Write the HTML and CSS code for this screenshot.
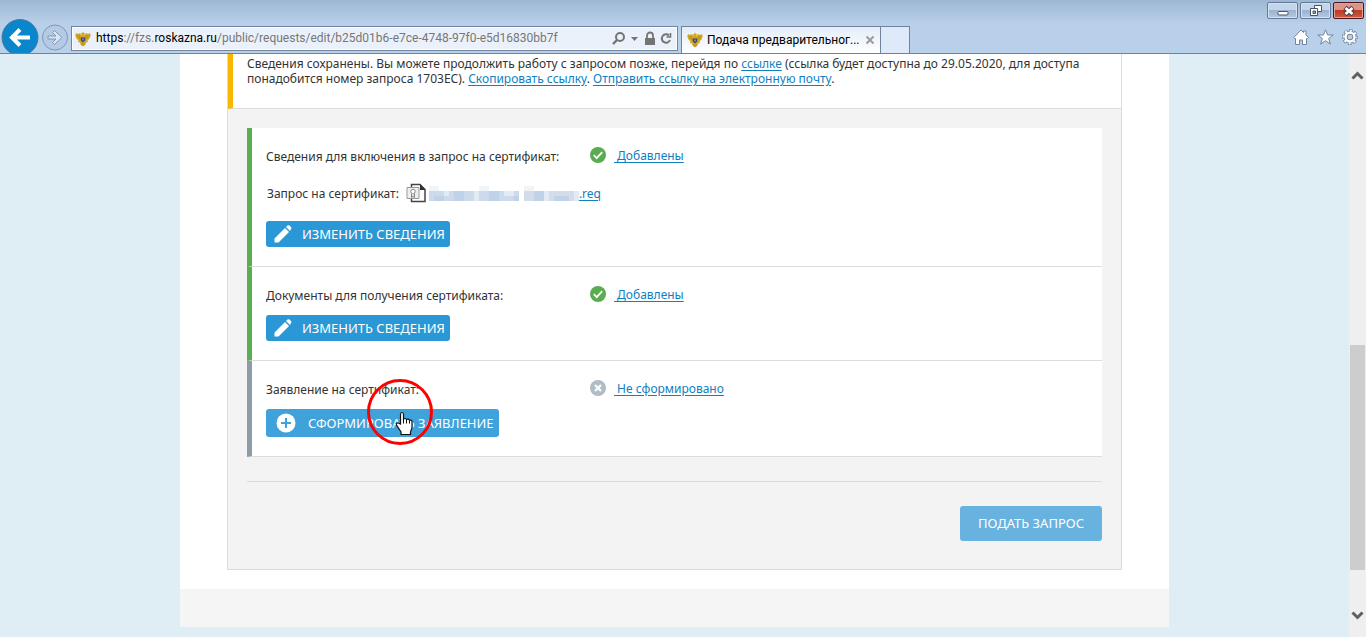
FILE: index.html
```html
<!DOCTYPE html>
<html lang="ru">
<head>
<meta charset="utf-8">
<title>Подача предварительного запроса</title>
<link rel="stylesheet" href="styles.css">
</head>
<body>
<svg class="defs" width="0" height="0" aria-hidden="true">
  <symbol id="eagle" viewBox="0 0 16 16">
    <path fill="#d2a722" d="M1 2l2 1 2-1 1 2h.8L5.500 2l1.500.3L8 .5l1 1.800 1.500-.3-1.300 2h.8l1-2 2 1 2-1 .7 2.500-1.200 3-2 2 .5 1.500-2 .5-.5 2-1.300.7L8 15.500l-1.200-1.200-1.300-.7-.5-2-2-.5.5-1.500-2-2-1.200-3z"/>
    <path stroke="#a07c14" fill="none" stroke-width=".5" d="M2 4l3 4M3.500 3.500L5.500 7M14 4l-3 4M12.500 3.500L10.500 7M7 12v3M9 12v3"/>
    <path fill="#3a3f86" d="M5.800 6.500h4.400v3L8 11.500 5.800 9.500z"/>
    <path fill="#d8c06a" d="M7.500 7.500h1v2h-1z"/>
  </symbol>
  <symbol id="check" viewBox="0 0 16 16">
    <circle cx="8" cy="8" r="8" fill="#57ad50"/>
    <path d="M3.800 8.200l2.900 2.900 5.500-6" fill="none" stroke="#fff" stroke-width="1.800"/>
  </symbol>
  <symbol id="cross" viewBox="0 0 16 16">
    <circle cx="8" cy="8" r="8" fill="#afbdc5"/>
    <path d="M5 5l6 6M11 5l-6 6" fill="none" stroke="#fff" stroke-width="2.200"/>
  </symbol>
  <symbol id="pencil" viewBox="0 0 18 18">
    <path fill="#fff" d="M.5 17.500v-4L11 3l4 4L4.500 17.500zM12 2l1.500-1.400q1-.8 2 0l1.500 1.500q.8 1 0 2L16 6z"/>
  </symbol>
</svg>
<header class="browser">
  <div class="titlebar">
    <button class="win" aria-label="Свернуть"><svg width="30" height="16"><rect x="10" y="8.500" width="10" height="3.500" rx="1" fill="#fff" stroke="#4a5367"/></svg></button>
    <button class="win" aria-label="Восстановить"><svg width="30" height="16" fill="#fff" stroke="#4a5367"><path d="M13.500 2.500h7v6h-7z"/><path d="M9.500 5.500h7v7h-7z"/><path d="M12 8h2.500v2.500H12z" fill="#8ba6c8"/></svg></button>
    <button class="win close" aria-label="Закрыть"><svg width="30" height="16"><path d="M11 4.500l8 7M19 4.500l-8 7" stroke="#4c3b4a" stroke-width="4.800"/><path d="M11.500 5l7 6M18.500 5l-7 6" stroke="#fff" stroke-width="2.800"/></svg></button>
  </div>
  <div class="navbar">
    <div class="history">
      <button class="bare" aria-label="Назад"><svg width="39" height="34" viewBox="0 0 39 34"><circle cx="20" cy="18.500" r="18" fill="#0a87cc" stroke="#51779f"/><path d="M30 18.500H13M20 10.500l-8 8 8 8" fill="none" stroke="#fff" stroke-width="4"/></svg></button>
      <button class="bare" aria-label="Вперёд"><svg width="30" height="34" viewBox="0 0 30 34"><circle cx="16" cy="18.500" r="12.500" fill="#b5cbe5" stroke="#8097b5"/><path d="M9 17h8l-3.500-3.500 2-2 7.500 7-7.500 7-2-2L17 20H9z" fill="#d9e6f5" stroke="#7e94b2"/></svg></button>
    </div>
    <div class="address">
      <svg class="ico16"><use href="#eagle"/></svg>
      <div class="url"><b>https</b>://fzs.<b>roskazna.ru</b>/public/requests/edit/b25d01b6-e7ce-4748-97f0-e5d16830bb7f</div>
      <button class="bare" aria-label="Поиск"><svg width="28" height="16" fill="none" stroke="#747474"><circle cx="8" cy="6" r="4" stroke-width="2"/><path d="M5 9l-4 4" stroke-width="2.400"/><path d="M19 6h7l-3.500 4z" fill="#747474" stroke="none"/></svg></button>
      <svg width="12" height="16" fill="#747474"><path d="M1 7h10v7H1z"/><path d="M3 7V4.500a3 3 0 0 1 6 0V7" fill="none" stroke="#747474" stroke-width="1.800"/></svg>
      <button class="bare" aria-label="Обновить"><svg width="12" height="16" fill="none" stroke="#747474" stroke-width="2"><path d="M9 4.500A4.200 4.200 0 1 0 10 9"/><path d="M6.500 6h4V2" stroke-width="1.600"/></svg></button>
    </div>
    <div class="tab">
      <svg class="ico16"><use href="#eagle"/></svg>
      <span class="tab-title">Подача предварительног...</span>
      <button class="bare" aria-label="Закрыть вкладку"><svg width="10" height="10"><path d="M1.500 1.500l7 7M8.500 1.500l-7 7" stroke="#9b9b9b" stroke-width="2"/></svg></button>
    </div>
    <button class="newtab" aria-label="Новая вкладка"></button>
    <div class="tools">
      <button class="bare" aria-label="Домой"><svg width="16" height="16"><path d="M.8 8.500L8 1l2.500 2.500V2h2.500v4l2.500 2.500-1 1H13.500v6H9.500v-4.500h-3v4.500h-4V9.500h-1z" fill="#fff" stroke="#71859f"/></svg></button>
      <button class="bare" aria-label="Избранное"><svg width="17" height="16"><path d="M8.500.8l2.100 5.200h5.600l-4.500 3.500 1.700 5.600-4.900-3.400-4.900 3.400 1.700-5.600L.8 6h5.600z" fill="#fff" stroke="#71859f"/></svg></button>
      <button class="bare" aria-label="Сервис"><svg width="16" height="16" viewBox="0 0 16 16"><circle cx="8" cy="8" r="6.300" fill="none" stroke="#71859f" stroke-width="3.400" stroke-dasharray="3.300 1.648" stroke-dashoffset="1.650"/><circle cx="8" cy="8" r="4.400" fill="none" stroke="#71859f" stroke-width="4.200"/><circle cx="8" cy="8" r="6.300" fill="none" stroke="#fff" stroke-width="2" stroke-dasharray="2 2.948" stroke-dashoffset="1"/><circle cx="8" cy="8" r="4.400" fill="none" stroke="#fff" stroke-width="2.400"/></svg></button>
    </div>
  </div>
</header>
<div class="viewport">
  <main class="site">
    <div class="panel">
      <p class="notice">Сведения сохранены. Вы можете продолжить работу с запросом позже, перейдя по <a href="#">ссылке</a> (ссылка будет доступна до 29.05.2020, для доступа понадобится номер запроса 1703ЕС). <a href="#">Скопировать ссылку</a>. <a href="#">Отправить ссылку на электронную почту</a>.</p>
      <div class="steps">
        <section class="step done">
          <div class="row"><span class="label">Сведения для включения в запрос на сертификат:</span><svg class="ico16"><use href="#check"/></svg><a class="status" href="#">&nbsp;Добавлены</a></div>
          <div class="row file"><span>Запрос на сертификат:</span>
            <svg width="20" height="20" viewBox="0 0 20 20"><path d="M5.500 1.500h8.500l5 5v12H5.500z" fill="#fff" stroke="#444" stroke-width="1.500"/><path d="M14 1v6h5.500z" fill="#333"/><path d="M1 4.500h12v11H1z" fill="#eee" stroke="#999"/><circle cx="7" cy="8.500" r="2.200" fill="#fff" stroke="#888"/><path d="M5.500 10.500v4l1.500-1 1.500 1v-4" fill="#ddd" stroke="#888"/></svg>
            <a class="filelink" href="#"><svg width="150" height="15" aria-hidden="true"><path fill="#eff4f9" d="M0 0h10v5H0zM50 0h10v5H50zM95 0h10v5H95z"/><path fill="#cddaeb" d="M0 5h90v10H0z"/><path fill="#d3ddea" d="M95 5h55v10H95z"/><path fill="#bfd2e8" d="M5 10h10v5H5zM25 5h10v10H25zM60 5h10v10H60zM85 10h5v5h-5zM105 5h10v10h-10zM125 10h15v5h-15z"/><path fill="#e2eaf3" d="M15 5h5v5h-5zM45 5h5v10h-5zM75 5h10v5H75zM115 5h5v10h-5zM145 5h5v10h-5z"/></svg>.req</a></div>
          <button class="action"><svg width="18" height="18"><use href="#pencil"/></svg>ИЗМЕНИТЬ СВЕДЕНИЯ</button>
        </section>
        <section class="step done">
          <div class="row"><span class="label">Документы для получения сертификата:</span><svg class="ico16"><use href="#check"/></svg><a class="status" href="#">&nbsp;Добавлены</a></div>
          <button class="action"><svg width="18" height="18"><use href="#pencil"/></svg>ИЗМЕНИТЬ СВЕДЕНИЯ</button>
        </section>
        <section class="step">
          <div class="row"><span class="label">Заявление на сертификат:</span><svg class="ico16"><use href="#cross"/></svg><a class="status" href="#">&nbsp;Не сформировано</a></div>
          <div class="target">
            <button class="action create"><svg width="20" height="20"><circle cx="10" cy="10" r="9.500" fill="#fff"/><path d="M10 5v10M5 10h10" stroke="#3fa2da" stroke-width="2"/></svg>СФОРМИРОВАТЬ ЗАЯВЛЕНИЕ</button>
            <svg class="pointer" width="66" height="66" viewBox="0 0 66 66" aria-hidden="true"><circle cx="33" cy="33" r="31.500" fill="none" stroke="#f00" stroke-width="3"/><path d="M33.500 45V35.500q0-2 1.500-2t1.500 2V40q2-1.200 3 .5 2-.8 3 .7 2.500-.5 2.500 1.500v6L43.500 53v2.500H34V53l-4.500-7q-.5-2.500 1.700-2z" fill="#fff" stroke="#111" stroke-width="1.200"/><path d="M36.500 39.500v5M39.500 40.500v4M42.500 41.500v3" stroke="#111"/></svg>
          </div>
        </section>
      </div>
      <div class="submit"><button class="send">ПОДАТЬ ЗАПРОС</button></div>
    </div>
    <footer class="footer"></footer>
  </main>
  <div class="scrollbar" aria-hidden="true">
    <svg width="13" height="10"><path d="M1.500 8.500l5-5 5 5" fill="none" stroke="#606060" stroke-width="3"/></svg>
    <div class="track"><div class="thumb"></div></div>
    <svg width="13" height="10"><path d="M1.500 1.500l5 5 5-5" fill="none" stroke="#606060" stroke-width="3"/></svg>
  </div>
</div>
</body>
</html>
```

FILE: styles.css
```css
* { box-sizing: border-box; }
body {
  margin: 0;
  height: 100vh;
  display: flex;
  flex-direction: column;
  overflow: hidden;
  background: #dfeef5;
  color: #333;
  font: 12px/15px "Noto Sans", "Open Sans", sans-serif;
}
button { font: inherit; cursor: pointer; }
svg { flex: none; display: block; }
a { color: #0f80c1; text-underline-offset: 2px; }
.defs { position: absolute; }
.ico16 { width: 16px; height: 16px; }
.bare { border: 0; padding: 0; background: none; }

.browser {
  flex: none;
  background: linear-gradient(#9db7d3, #b9d0ea 24px);
  border-bottom: 1px solid #6b83a3;
}
.titlebar {
  display: flex;
  justify-content: flex-end;
  gap: 2px;
  height: 19px;
  padding: 2px 2px 0 0;
}
.win {
  width: 31px;
  height: 17px;
  padding: 0;
  overflow: hidden;
  border: 1px solid #62799a;
  border-radius: 2px;
  box-shadow: inset 0 0 0 1px #d3e1f1;
  background: linear-gradient(#c3d5e9 50%, #9ab3d0 50%, #b5cae3);
}
.win.close {
  border-color: #4b1420;
  box-shadow: inset 0 0 0 1px #e3a196;
  background: linear-gradient(#dd9486 50%, #b93c22 50%, #cc5d45);
}
.navbar { display: flex; height: 34px; }
.history { display: flex; width: 71px; }
.address {
  flex: 0 1 607px;
  min-width: 0;
  height: 25px;
  margin: 7px 3px 0 0;
  padding: 0 5px 0 3px;
  display: flex;
  align-items: center;
  gap: 4px;
  border: 1px solid #72839c;
  box-shadow: inset 0 0 0 1px #fff;
  background: #ebf1fa;
}
.url {
  flex: 1;
  min-width: 0;
  margin-left: 1px;
  overflow: hidden;
  white-space: nowrap;
  color: #777;
  font-family: Roboto, "Open Sans", sans-serif;
}
.url b { font-weight: 400; color: #000; }
.tab {
  flex: 0 1 200px;
  min-width: 0;
  height: 27px;
  margin-top: 7px;
  padding: 0 5px;
  display: flex;
  align-items: center;
  gap: 4px;
  border: 1px solid #72839c;
  border-bottom: 0;
  background: linear-gradient(#e3edf8, #fff);
  color: #000;
}
.tab-title {
  flex: 1;
  overflow: hidden;
  white-space: nowrap;
  font-family: Roboto, "Open Sans", sans-serif;
}
.newtab {
  width: 29px;
  height: 27px;
  margin-top: 7px;
  border: 1px solid #72839c;
  border-width: 1px 1px 0 0;
  background: #deeafa;
}
.tools {
  margin-left: auto;
  padding: 2px 8px 0 0;
  display: flex;
  align-items: center;
  gap: 8px;
}

.viewport { flex: 1; min-height: 0; display: flex; }
.site {
  flex: 1;
  align-self: flex-start;
  max-width: 989px;
  margin: 0 auto;
  background: #fff;
}
.panel {
  margin: 0 47px 19px;
  border: 1px solid #dcdcdc;
  border-top: 0;
  background: #f3f3f3;
}
.notice {
  margin: 0;
  padding: 2px 40px 22px 14px;
  border-left: 5px solid #f8b800;
  border-bottom: 1px solid #dcdcdc;
  background: #fff;
}
.steps { margin: 19px 19px 24px; }
.step {
  padding: 17px 14px 19px;
  border-left: 5px solid #8e9da5;
  border-bottom: 1px solid #dcdcdc;
  background: #fff;
}
.step.done { border-left-color: #5bad51; }
.row {
  display: flex;
  align-items: center;
  height: 20px;
  margin-bottom: 11px;
}
.label { width: 324px; padding-top: 2px; }
.status { margin-left: 8px; }
.done .row:has(+ .file) { margin-bottom: 18px; }
.row.file { gap: 7px; margin-bottom: 18px; padding-left: 1px; }
.filelink { display: flex; margin-left: -4px; }
.action {
  display: flex;
  align-items: center;
  gap: 10px;
  height: 26px;
  padding: 0 5px 0 8px;
  border: 0;
  border-radius: 3px;
  background: #2a98d6;
  color: #fff;
  font-size: 13px;
}
.action.create { gap: 12px; height: 28px; padding-left: 10px; background: #3fa2da; }
.target { position: relative; width: fit-content; }
.pointer { position: absolute; left: 101px; top: -30px; }
.submit {
  display: flex;
  justify-content: flex-end;
  margin: 0 19px;
  padding: 24px 0 28px;
  border-top: 1px solid #dcdcdc;
}
.send {
  height: 35px;
  padding: 0 18px;
  border: 0;
  border-radius: 3px;
  background: #68b2e0;
  color: #fff;
  font-size: 13px;
}
.footer { height: 38px; background: #f5f5f5; }

.scrollbar {
  flex: none;
  width: 17px;
  padding: 16px 0;
  display: flex;
  flex-direction: column;
  align-items: center;
  background: #efefef;
}
.track {
  flex: 1;
  width: 15px;
  display: flex;
  flex-direction: column;
  justify-content: flex-end;
  padding-bottom: 41px;
}
.thumb { height: 46%; background: #cdcdcd; }
```
